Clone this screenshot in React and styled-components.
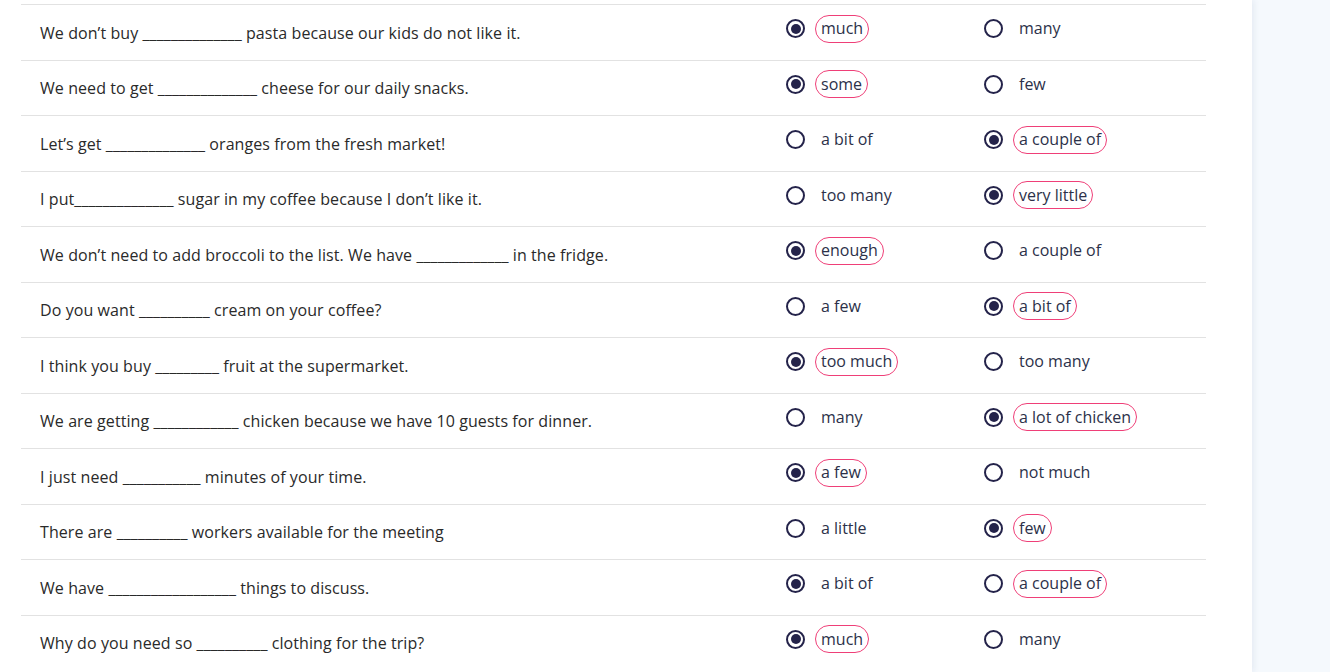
import React from "react";
import styled, { createGlobalStyle } from "styled-components";

const Global = createGlobalStyle`
  html, body { margin: 0; padding: 0; }
  body {
    background: #f5f9fd;
    font-family: "Open Sans", "Liberation Sans", sans-serif;
    overflow: hidden;
  }
`;

const Page = styled.div`
  display: flex;
  height: 672px;
`;

const Panel = styled.main`
  width: 1252px;
  flex: none;
  background: #ffffff;
  box-shadow: 2px 0 6px rgba(40, 70, 120, 0.08);
  padding: 4px 0 0 21px;
  box-sizing: border-box;
`;

const List = styled.div`
  width: 1185px;
  display: flex;
  flex-direction: column;
`;

const Row = styled.div`
  display: grid;
  grid-template-columns: 765px 198px 1fr;
  align-items: center;
  height: 55.5px;
  box-sizing: border-box;
  border-top: 1px solid #e2e2e2;
`;

const Question = styled.div`
  padding-left: 19px;
  padding-top: 1px;
  font-size: 16px;
  letter-spacing: 0.08px;
  color: #2a2a2a;
  white-space: pre;
`;

const Option = styled.label`
  display: flex;
  align-items: center;
  padding-bottom: 7px;
  cursor: pointer;
`;

const Radio = styled.span`
  width: 19px;
  height: 19px;
  box-sizing: border-box;
  border-radius: 50%;
  border: 2px solid #24234a;
  display: flex;
  align-items: center;
  justify-content: center;
  flex: none;
  &::after {
    content: "";
    width: 10px;
    height: 10px;
    border-radius: 50%;
    background: ${(p) => (p.$checked ? "#24234a" : "transparent")};
  }
`;

const Label = styled.span`
  margin-left: 10px;
  height: 28px;
  box-sizing: border-box;
  display: inline-flex;
  align-items: center;
  padding: 0 5px 1px;
  border-radius: 14px;
  border: 1px solid ${(p) => (p.$marked ? "#ef3f78" : "transparent")};
  font-size: 16px;
  color: #2c3149;
  white-space: nowrap;
`;

const blank = (n) => "_".repeat(n);

const rows = [
  [`We don\u2019t buy ${blank(14)} pasta because our kids do not like it.`, "much", "many", 0, 0],
  [`We need to get ${blank(14)} cheese for our daily snacks.`, "some", "few", 0, 0],
  [`Let\u2019s get ${blank(14)} oranges from the fresh market!`, "a bit of", "a couple of", 1, 1],
  [`I put${blank(14)} sugar in my coffee because I don\u2019t like it.`, "too many", "very little", 1, 1],
  [`We don\u2019t need to add broccoli to the list. We have ${blank(13)} in the fridge.`, "enough", "a couple of", 0, 0],
  [`Do you want ${blank(10)} cream on your coffee?`, "a few", "a bit of", 1, 1],
  [`I think you buy ${blank(9)} fruit at the supermarket.`, "too much", "too many", 0, 0],
  [`We are getting ${blank(12)} chicken because we have 10 guests for dinner.`, "many", "a lot of chicken", 1, 1],
  [`I just need ${blank(11)} minutes of your time.`, "a few", "not much", 0, 0],
  [`There are ${blank(10)} workers available for the meeting`, "a little", "few", 1, 1],
  [`We have ${blank(18)} things to discuss.`, "a bit of", "a couple of", 0, 1],
  [`Why do you need so ${blank(10)} clothing for the trip?`, "much", "many", 0, 0],
];

export default function App() {
  return (
    <>
      <Global />
      <Page>
        <Panel>
          <List>
            {rows.map(([q, a, b, checked, marked], i) => (
              <Row key={i}>
                <Question>{q}</Question>
                <Option>
                  <Radio $checked={checked === 0} />
                  <Label $marked={marked === 0}>{a}</Label>
                </Option>
                <Option>
                  <Radio $checked={checked === 1} />
                  <Label $marked={marked === 1}>{b}</Label>
                </Option>
              </Row>
            ))}
          </List>
        </Panel>
      </Page>
    </>
  );
}
